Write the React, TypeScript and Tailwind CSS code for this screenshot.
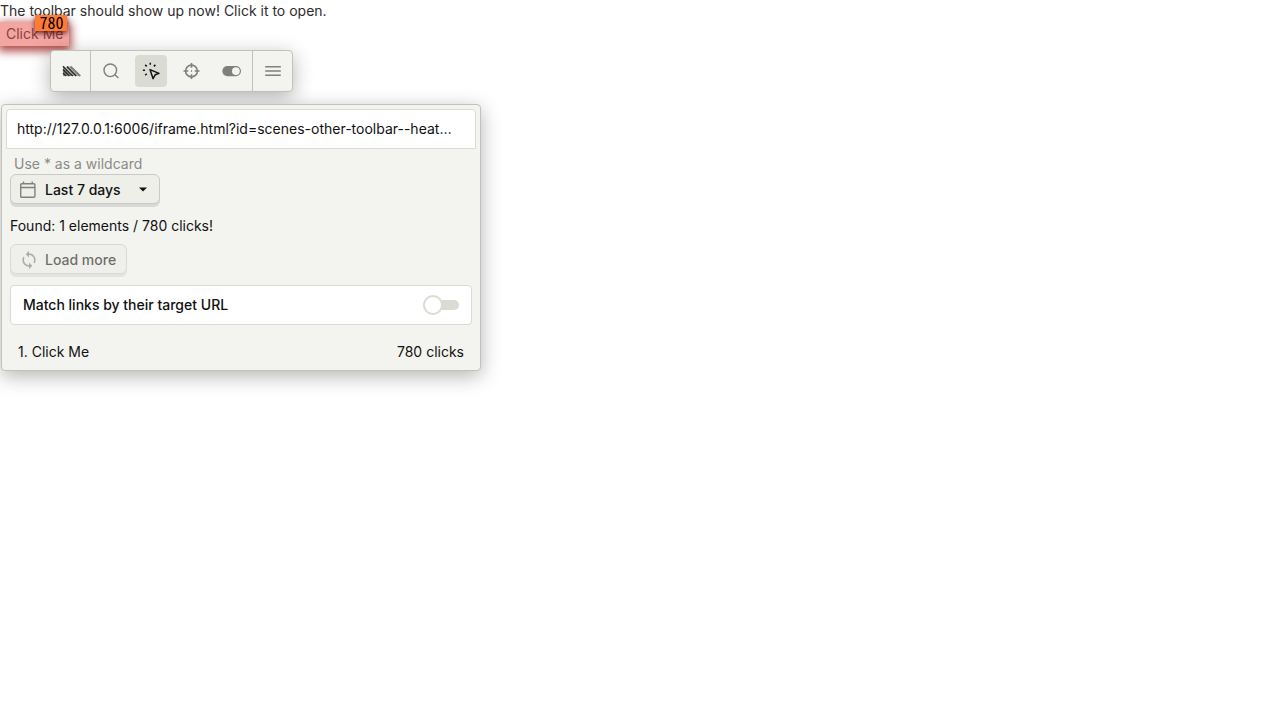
import React, { useState } from 'react'

function LogoIcon() {
    return (
        <svg width="20" height="12" viewBox="0 0 20 12" fill="none" aria-hidden="true">
            <path d="M2 1 12 11H2z" fill="#8b8c87" />
            <path d="M6 1h1l9 10h-4zM10.500 1 20 11h-5L6 2z" fill="#b4b5af" />
            <path d="M2 8l3 3M2 4.600 8.400 11M2 1.200l9.800 9.800M5.800 1.600 15.200 11" stroke="#30302f" strokeWidth="1.5" />
            <path d="M9.500 1.600 19.200 11" stroke="#7f807c" strokeWidth="2" />
        </svg>
    )
}

function SearchIcon() {
    return (
        <svg width="20" height="20" viewBox="0 0 20 20" fill="none" stroke="currentColor" strokeWidth="1.4" aria-hidden="true">
            <circle cx="9.300" cy="9.300" r="6.300" />
            <path d="m13.800 13.800 3.700 3.200" />
        </svg>
    )
}

function CursorClickIcon() {
    return (
        <svg width="20" height="20" viewBox="0 0 20 20" fill="none" stroke="currentColor" strokeWidth="1.5" aria-hidden="true">
            <path d="m9 8.600 9 3.800-3.800 1.400-2.200 3.800z" strokeLinejoin="round" />
            <path d="M9.300 1.800v2M4.200 3.900l1.500 1.500M1.900 9.300h2.100M14.400 3.900l-1.500 1.500M5.700 12.700l-1.500 1.500" />
        </svg>
    )
}

function TargetIcon() {
    return (
        <svg width="20" height="20" viewBox="0 0 20 20" fill="none" stroke="currentColor" strokeWidth="1.6" aria-hidden="true">
            <circle cx="10.500" cy="10" r="5.900" />
            <path d="M10.500 2v4.800M10.500 13.200V18M2.500 10h4.800M13.700 10h4.800" />
            <path d="M10.500 9.200v1.600" strokeWidth="1.2" />
        </svg>
    )
}

function FlagToggleIcon() {
    return (
        <svg width="20" height="20" viewBox="0 0 20 20" aria-hidden="true">
            <rect x="1.300" y="5" width="18.700" height="10.200" rx="5.100" fill="currentColor" />
            <circle cx="14.900" cy="10.100" r="3.900" fill="#f3f4ef" />
        </svg>
    )
}

function MenuIcon() {
    return (
        <svg width="20" height="20" viewBox="0 0 20 20" fill="none" stroke="currentColor" strokeWidth="1.5" aria-hidden="true">
            <path d="M2.200 5.700h15.600M2.200 10h15.600M2.200 14.300h15.600" />
        </svg>
    )
}

function CalendarIcon() {
    return (
        <svg width="18" height="18" viewBox="0 0 18 18" fill="none" stroke="currentColor" strokeWidth="1.4" aria-hidden="true">
            <rect x="1.700" y="2.700" width="14.200" height="13.600" rx="1" />
            <path d="M2 6.500h14M4.500 .5v2.200M13.200 .5v2.200" />
        </svg>
    )
}

function SyncIcon() {
    return (
        <svg width="20" height="20" viewBox="0 0 24 24" fill="currentColor" aria-hidden="true">
            <path d="M12 4V1L8 5l4 4V6c3.310 0 6 2.690 6 6 0 1.010-.25 1.970-.7 2.800l1.460 1.460C19.540 15.030 20 13.570 20 12c0-4.420-3.580-8-8-8zm0 14c-3.310 0-6-2.690-6-6 0-1.010.25-1.970.7-2.800L5.240 7.740C4.460 8.970 4 10.430 4 12c0 4.420 3.580 8 8 8v3l4-4-4-4v3z" />
        </svg>
    )
}

function ToolbarButton({ label, active, children }: { label: string; active?: boolean; children: React.ReactNode }) {
    return (
        <button
            type="button"
            aria-label={label}
            aria-pressed={active}
            className={`flex size-8 items-center justify-center rounded ${active ? 'bg-[#dadbd2] text-[#111]' : 'text-[#7f807c]'}`}
        >
            {children}
        </button>
    )
}

function Toolbar() {
    return (
        <div
            role="toolbar"
            aria-label="Toolbar"
            className="ml-[50px] flex w-fit rounded border border-[#c1c2b9] bg-[#f3f4ef] shadow-[0_5px_20px_rgba(0,0,0,0.3)]"
        >
            <div className="border-r border-[#c1c2b9] p-1 pr-[3px]">
                <ToolbarButton label="Logo menu">
                    <LogoIcon />
                </ToolbarButton>
            </div>
            <div className="flex gap-2 border-r border-[#c1c2b9] py-1 pr-[5px] pl-1">
                <ToolbarButton label="Inspect">
                    <SearchIcon />
                </ToolbarButton>
                <ToolbarButton label="Heatmap" active>
                    <CursorClickIcon />
                </ToolbarButton>
                <ToolbarButton label="Actions">
                    <TargetIcon />
                </ToolbarButton>
                <ToolbarButton label="Feature flags">
                    <FlagToggleIcon />
                </ToolbarButton>
            </div>
            <div className="p-1 pr-[3px]">
                <ToolbarButton label="More options">
                    <MenuIcon />
                </ToolbarButton>
            </div>
        </div>
    )
}

function HeatmapPanel() {
    const [url, setUrl] = useState('http://127.0.0.1:6006/iframe.html?id=scenes-other-toolbar--heatmap')
    const [matchLinks, setMatchLinks] = useState(false)
    return (
        <section
            aria-label="Heatmap"
            className="ml-px w-full max-w-[480px] rounded border border-[#c1c2b9] bg-[#f3f4ef] shadow-[0_5px_20px_rgba(0,0,0,0.3)]"
        >
            <div className="p-1 pb-0">
                <input
                    aria-label="Page URL"
                    value={url}
                    onChange={(e) => setUrl(e.target.value)}
                    className="block h-10 w-full truncate rounded-t border border-[#dadbd2] bg-white px-2.5 pr-4 pb-0.5 outline-none"
                />
            </div>
            <div className="px-2">
                <p className="mt-[5px] pl-1 leading-5 text-[#8b8b87]">Use * as a wildcard</p>
                <button
                    type="button"
                    className="flex h-[30px] items-center rounded-md border border-[#c9cac6] bg-[#eeefe9] pt-0.5 pr-2.5 pl-2 font-medium shadow-[0_3px_0_#d9d9da]"
                >
                    <span className="text-[#80817d]">
                        <CalendarIcon />
                    </span>
                    <span className="ml-2">Last 7 days</span>
                    <svg className="ml-4" width="12" height="12" viewBox="0 0 12 12" aria-hidden="true">
                        <path d="M2 3.500h8l-4 4z" fill="#111" />
                    </svg>
                </button>
                <p className="mt-[11px]">Found: 1 elements / 780 clicks!</p>
                <button
                    type="button"
                    disabled
                    className="mt-[7px] flex h-[30px] items-center rounded-md border border-[#c9cac6] bg-[#eeefe9] pt-0.5 pr-2.5 pl-2 font-medium opacity-60 shadow-[0_3px_0_#d9d9da]"
                >
                    <span className="text-[#80817d]">
                        <SyncIcon />
                    </span>
                    <span className="ml-1.5">Load more</span>
                </button>
                <label className="mt-[11px] flex h-10 items-center justify-between rounded border border-[#dadbd2] bg-white px-3 font-medium">
                    Match links by their target URL
                    <span className="relative flex h-5 w-9 items-center">
                        <input
                            type="checkbox"
                            role="switch"
                            checked={matchLinks}
                            onChange={(e) => setMatchLinks(e.target.checked)}
                            className="peer h-2.5 w-9 appearance-none rounded-full bg-[#dadbd2]"
                        />
                        <span className="absolute left-0 size-5 rounded-full border-2 border-[#dadbd2] bg-white peer-checked:left-4" />
                    </span>
                </label>
                <div className="mt-4 flex justify-between px-2 pb-[7px]">
                    <span>1. Click Me</span>
                    <span>780 clicks</span>
                </div>
            </div>
        </section>
    )
}

export default function App() {
    return (
        <main className="min-h-screen bg-white font-['Inter',sans-serif] text-sm leading-[22px] text-[#111]">
            <p className="text-[#2d2d2d]">The toolbar should show up now! Click it to open.</p>
            <div className="relative w-fit">
                <button type="button" className="block h-6 bg-[#f3a5a1] px-1.5 text-[#8b4040] shadow-[0_3px_10px_2px_rgba(150,20,20,0.8)]">
                    Click Me
                </button>
                <span className="absolute -top-[7px] right-0.5 h-4 bg-[#ff7a32] px-1 font-['Noto_Sans_Mono_CJK_SC','Noto_Sans_Mono_CJK_JP',monospace] text-base leading-[14px] text-black slashed-zero shadow-[0_2px_5px_rgba(60,0,0,0.8)]">
                    780
                </span>
            </div>
            <div className="relative mt-1 flex flex-col gap-3">
                <Toolbar />
                <HeatmapPanel />
            </div>
        </main>
    )
}
